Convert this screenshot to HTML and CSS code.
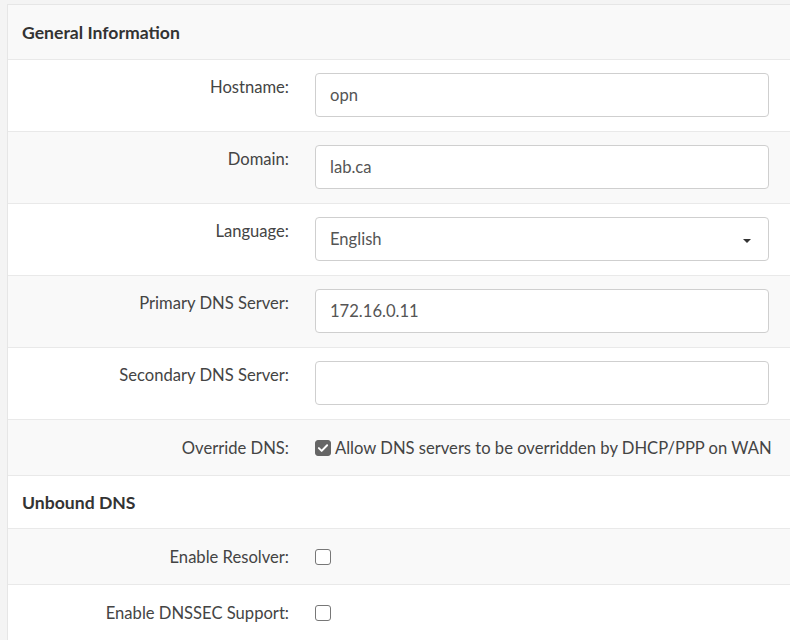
FILE: index.html
```html
<!DOCTYPE html>
<html lang="en">
<head>
<meta charset="utf-8">
<title>General Information</title>
<link rel="stylesheet" href="styles.css">
</head>
<body>
<div class="panel">
  <div class="row head"><span class="head-title">General Information</span></div>
  <div class="row field">
    <div class="label">Hostname:</div>
    <div class="value"><div class="input">opn</div></div>
  </div>
  <div class="row field">
    <div class="label">Domain:</div>
    <div class="value"><div class="input">lab.ca</div></div>
  </div>
  <div class="row field">
    <div class="label">Language:</div>
    <div class="value"><div class="input select">English<span class="caret"></span></div></div>
  </div>
  <div class="row field">
    <div class="label">Primary DNS Server:</div>
    <div class="value"><div class="input">172.16.0.11</div></div>
  </div>
  <div class="row field">
    <div class="label">Secondary DNS Server:</div>
    <div class="value"><div class="input"></div></div>
  </div>
  <div class="row check">
    <div class="label">Override DNS:</div>
    <div class="value"><span class="box checked"><svg viewBox="0 0 16 16" width="12" height="12"><path d="M2.5 8.2 L6.2 11.8 L13.5 4.3" fill="none" stroke="#fff" stroke-width="2.6" stroke-linecap="round" stroke-linejoin="round"/></svg></span><span class="check-text">Allow DNS servers to be overridden by DHCP/PPP on WAN</span></div>
  </div>
  <div class="row head"><span class="head-title">Unbound DNS</span></div>
  <div class="row check">
    <div class="label">Enable Resolver:</div>
    <div class="value"><span class="box"></span></div>
  </div>
  <div class="row check">
    <div class="label">Enable DNSSEC Support:</div>
    <div class="value"><span class="box"></span></div>
  </div>
</div>
</body>
</html>
```

FILE: styles.css
```css
html, body {
  margin: 0;
  padding: 0;
}
body {
  background: #f4f4f4;
  padding: 4px 0 0 7px;
  font-family: "Lato", "Liberation Sans", sans-serif;
  font-size: 16.6px;
  color: #444;
  height: 640px;
  overflow: hidden;
  box-sizing: border-box;
}
.panel {
  background: #fff;
  border-top: 1px solid #e6e6e6;
  border-left: 1px solid #e6e6e6;
}
.row {
  display: grid;
  grid-template-columns: 296px 1fr;
  border-top: 1px solid #e9e9e9;
}
.row:first-child {
  border-top: none;
}
.row:nth-child(odd) {
  background: #f9f9f9;
}
.head {
  display: flex;
  align-items: center;
  padding-left: 14px;
  height: 52px;
}
.row.head:first-child {
  height: 54px;
}
.head-title {
  font-weight: bold;
  font-size: 17.6px;
  color: #333;
}
.field {
  height: 71px;
}
.label {
  text-align: right;
  padding-right: 15px;
  white-space: nowrap;
}
.field .label {
  padding-top: 14px;
  line-height: 26px;
}
.value {
  padding: 13px 21px 0 11px;
  min-width: 0;
}
.input {
  box-sizing: border-box;
  height: 44px;
  border: 1px solid #cfcfcf;
  border-radius: 4px;
  background: #fff;
  padding: 0 14px;
  display: flex;
  align-items: center;
  color: #555;
  position: relative;
}
.caret {
  position: absolute;
  right: 17px;
  top: 21px;
  width: 0;
  height: 0;
  border-left: 4px solid transparent;
  border-right: 4px solid transparent;
  border-top: 4px solid #333;
}
.check {
  height: 55px;
  align-items: center;
}
.check .value {
  padding: 0 0 0 11px;
  display: flex;
  align-items: center;
}
.box {
  box-sizing: border-box;
  width: 16px;
  height: 16px;
  border: 1.5px solid #777;
  border-radius: 3px;
  background: #fff;
  display: inline-flex;
  align-items: center;
  justify-content: center;
  flex: none;
}
.box.checked {
  background: #666;
  border-color: #666;
}
.check-text {
  margin-left: 4px;
  color: #444;
  white-space: nowrap;
}
```
